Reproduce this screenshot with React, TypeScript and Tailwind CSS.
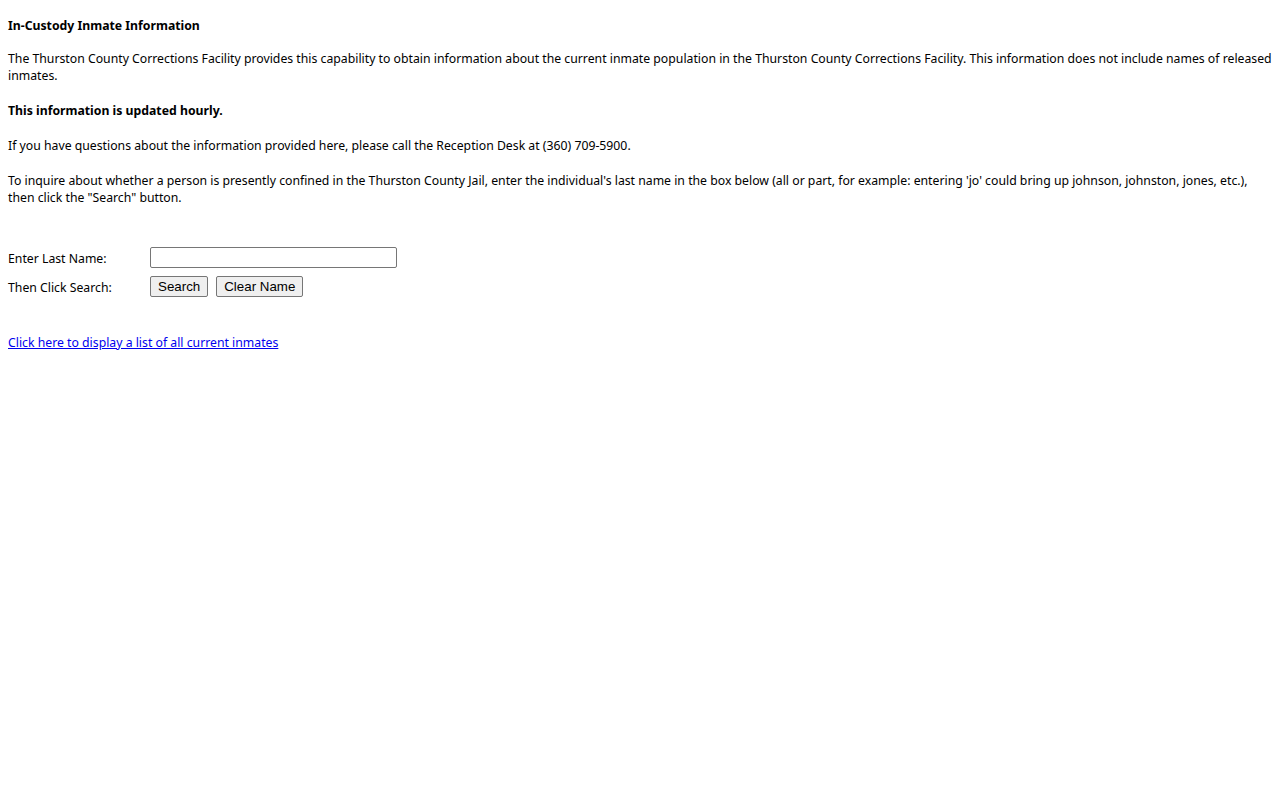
export default function App() {
  return (
    <div className="min-h-screen bg-white px-2 pt-[17px] text-[12.25px] leading-[17px] text-black" style={{ fontFamily: '"Noto Sans", "Open Sans", sans-serif' }}>
      <p className="font-bold">In-Custody Inmate Information</p>
      <p className="mt-4">
        The Thurston County Corrections Facility provides this capability to obtain information about the current inmate population in the Thurston County Corrections Facility. This information does not include names of released inmates.
      </p>
      <p className="mt-[18px] font-bold">This information is updated hourly.</p>
      <p className="mt-[18px]">If you have questions about the information provided here, please call the Reception Desk at (360) 709-5900.</p>
      <p className="mt-[18px]">
        To inquire about whether a person is presently confined in the Thurston County Jail, enter the individual's last name in the box below (all or part, for example: entering 'jo' could bring up johnson, johnston, jones, etc.), then click the "Search" button.
      </p>
      <div className="mt-[41px] grid grid-cols-[142px_1fr] items-center gap-y-[8px]">
        <span className="pt-[2px]">Enter Last Name:</span>
        <input type="text" className="h-[21px] w-[247px] rounded-[2px] border border-[#767676] px-1 outline-none" />
        <span className="pt-[2px]">Then Click Search:</span>
        <div className="flex gap-2" style={{ fontFamily: '"Liberation Sans", Arial, sans-serif' }}>
          <button className="h-[21px] rounded-[2px] border border-[#767676] bg-[#efefef] px-[7px] text-[13.33px] leading-none">Search</button>
          <button className="h-[21px] rounded-[2px] border border-[#767676] bg-[#efefef] px-[7px] text-[13.33px] leading-none">Clear Name</button>
        </div>
      </div>
      <a href="#" className="mt-[37px] inline-block text-[#0000ee] underline">Click here to display a list of all current inmates</a>
    </div>
  );
}
